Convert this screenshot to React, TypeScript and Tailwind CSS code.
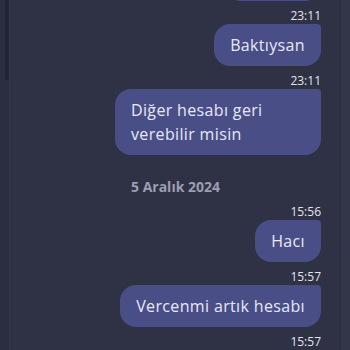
import React from "react";

interface Message {
  time: string;
  text: string;
}

interface Block {
  date?: string;
  messages: Message[];
}

// Visible part of the conversation
const blocks: Block[] = [
  {
    messages: [
      { time: "23:11", text: "Bakarım" },
      { time: "23:11", text: "Baktıysan" },
      { time: "23:11", text: "Diğer hesabı geri verebilir misin" },
    ],
  },
  {
    date: "5 Aralık 2024",
    messages: [
      { time: "15:56", text: "Hacı" },
      { time: "15:57", text: "Vercenmi artık hesabı" },
      { time: "15:57", text: "Bu arada" },
    ],
  },
];

const Bubble: React.FC<{ msg: Message; first?: boolean }> = ({ msg, first }) => (
  <div className={`flex flex-col items-end ${first ? "" : "mt-[7px]"}`}>
    {!first && (
      <span className="text-[12px] leading-[16px] text-[#e4e5ee]">{msg.time}</span>
    )}
    <div className="max-w-[206px] rounded-2xl rounded-tr-[4px] bg-[#4a4e87] px-4 py-[9px] text-[16px] leading-[24px] tracking-[0.35px] text-[#e8e9f6]">
      {msg.text}
    </div>
  </div>
);

export default function App() {
  return (
    <div
      className="flex h-[350px] w-[350px] overflow-hidden bg-[#2f3245]"
      style={{ fontFamily: '"Open Sans", "Noto Sans", sans-serif' }}
    >
      {/* left panel edge with scrollbar */}
      <div className="relative w-[10px] shrink-0 border-r border-[#35384c] bg-[#2b2d41]">
        <div className="absolute right-0 top-0 h-[80px] w-[4px] bg-[#202237]" />
      </div>

      {/* chat column */}
      <div className="flex-1 overflow-hidden pr-[19px] pl-5">
        <div className="-mt-[41px] flex flex-col">
          {blocks.map((block, bi) => (
            <div key={bi} className="flex flex-col">
              {block.date && (
                <div className="mt-[22px] text-center text-[14px] font-bold leading-[20px] text-[#9c9eb4]">
                  {block.date}
                </div>
              )}
              {block.messages.map((m, mi) => (
                <Bubble key={mi} msg={m} first={bi === 0 && mi === 0} />
              ))}
            </div>
          ))}
        </div>
      </div>

      {/* right panel edge */}
      <div className="w-[10px] shrink-0 border-l border-[#2a2c3e] bg-[#33364a]" />
    </div>
  );
}
